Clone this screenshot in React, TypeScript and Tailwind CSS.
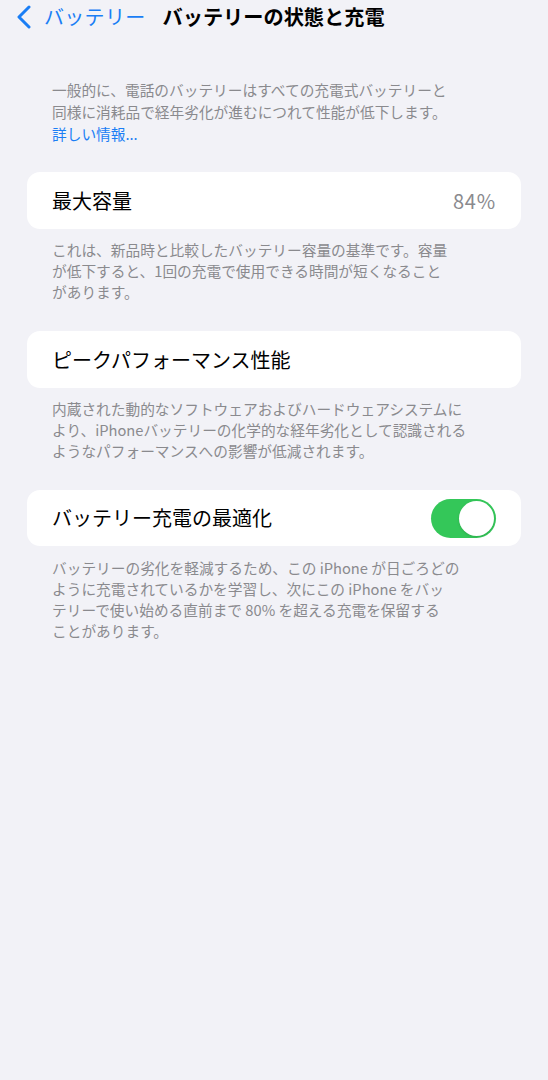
const font = { fontFamily: '"Noto Sans CJK JP", "Noto Sans", sans-serif' };

const Footer = ({ children }: { children: React.ReactNode }) => (
  <p className="px-[52px] text-[14.7px] leading-[21px] text-[#8a8a8e]">{children}</p>
);

const Card = ({ children }: { children: React.ReactNode }) => (
  <div className="mx-[27px] bg-white rounded-[13px] flex items-center justify-between pl-[25px] pr-[25px] h-[57px]">
    {children}
  </div>
);

const Toggle = () => (
  <div className="w-[65px] h-[39px] rounded-full bg-[#34c759] flex items-center justify-end pr-[2px]">
    <div className="w-[35px] h-[35px] rounded-full bg-white shadow-sm" />
  </div>
);

export default function App() {
  return (
    <div className="min-h-[1080px] w-full bg-[#f2f2f7]" style={font}>
      <div className="h-[34px] flex items-center pl-[16px]">
        <svg width="16" height="24" viewBox="0 0 16 24" className="mr-[12px]">
          <path d="M13 2 L3 12 L13 22" fill="none" stroke="#1a7ef5" strokeWidth="3" strokeLinecap="round" strokeLinejoin="round" />
        </svg>
        <span className="text-[20px] text-[#1a7ef5] tracking-[0.3px]">バッテリー</span>
        <span className="ml-[17px] text-[20.2px] font-bold text-black">バッテリーの状態と充電</span>
      </div>

      <div className="mt-[45px]">
        <p className="px-[52px] text-[14.7px] leading-[22px] text-[#8a8a8e]">
          一般的に、電話のバッテリーはすべての充電式バッテリーと
          <br />
          同様に消耗品で経年劣化が進むにつれて性能が低下します。
          <br />
          <span className="text-[#1a7ef5]">詳しい情報...</span>
        </p>
      </div>

      <div className="mt-[27px]">
        <Card>
          <span className="text-[20px] text-black">最大容量</span>
          <span className="text-[20px] text-[#8a8a8e] tracking-[0.8px]">84%</span>
        </Card>
      </div>
      <div className="mt-[10px]">
        <Footer>
          これは、新品時と比較したバッテリー容量の基準です。容量
          <br />
          が低下すると、1回の充電で使用できる時間が短くなること
          <br />
          があります。
        </Footer>
      </div>

      <div className="mt-[29px]">
        <Card>
          <span className="text-[20px] text-black">ピークパフォーマンス性能</span>
        </Card>
      </div>
      <div className="mt-[10px]">
        <Footer>
          内蔵された動的なソフトウェアおよびハードウェアシステムに
          <br />
          より、iPhoneバッテリーの化学的な経年劣化として認識される
          <br />
          ようなパフォーマンスへの影響が低減されます。
        </Footer>
      </div>

      <div className="mt-[29px]">
        <div className="mx-[27px] bg-white rounded-[13px] flex items-center justify-between pl-[25px] pr-[25px] h-[56px]">
          <span className="text-[20px] text-black">バッテリー充電の最適化</span>
          <Toggle />
        </div>
      </div>
      <div className="mt-[11px]">
        <Footer>
          バッテリーの劣化を軽減するため、この iPhone が日ごろどの
          <br />
          ように充電されているかを学習し、次にこの iPhone をバッ
          <br />
          テリーで使い始める直前まで 80% を超える充電を保留する
          <br />
          ことがあります。
        </Footer>
      </div>
    </div>
  );
}
